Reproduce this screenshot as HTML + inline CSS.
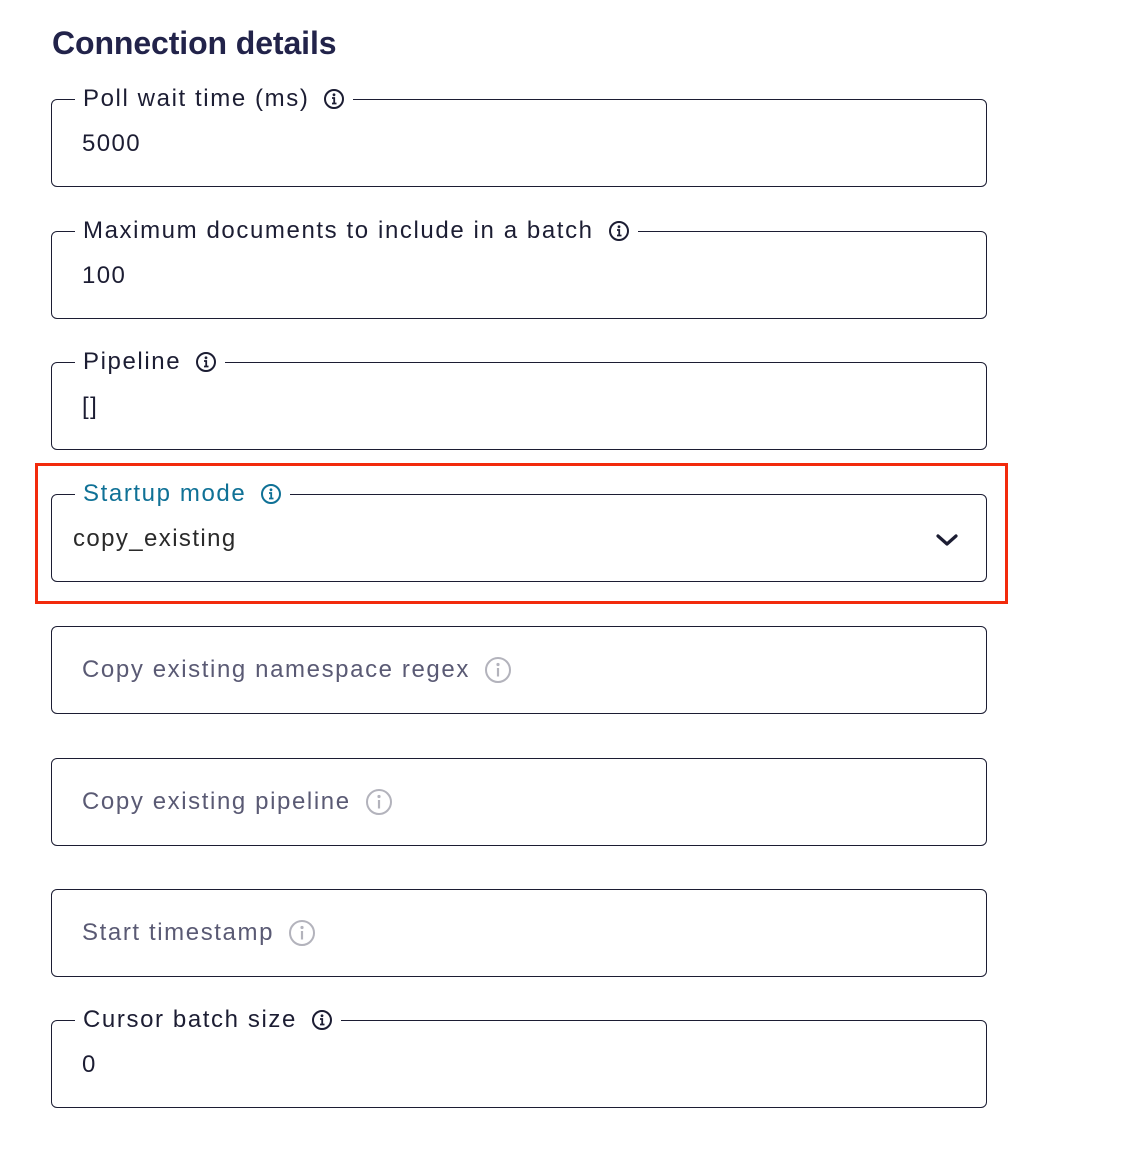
<!DOCTYPE html>
<html><head><meta charset="utf-8"><style>
*{margin:0;padding:0;box-sizing:border-box}
body{width:1140px;height:1174px;background:#fff;font-family:"Liberation Sans",sans-serif;position:relative;overflow:hidden;color:#1c1d33}
h1{position:absolute;left:52px;top:25px;font-size:32px;font-weight:700;color:#22234a;letter-spacing:-0.1px}
.box{position:absolute;left:51px;width:936px;height:88px;border:1.3px solid #1c1d33;border-radius:6px}
.leg{position:absolute;left:23px;top:-17px;background:#fff;padding:0 8px;font-size:24px;line-height:32px;display:flex;align-items:center;white-space:nowrap;letter-spacing:1.6px}
.val{position:absolute;left:30px;top:29px;font-size:24px;line-height:30px;letter-spacing:1.4px}
.ph{position:absolute;left:30px;top:26px;font-size:24px;line-height:34px;color:#5a5a74;display:flex;align-items:center;letter-spacing:1.6px}
.ic{display:inline-block;margin-left:14px}
.red{position:absolute;left:35px;top:463px;width:973px;height:141px;border:3px solid #f22a0c}
</style></head><body>
<h1>Connection details</h1>

<div class="box" style="top:99px"><div class="leg">Poll wait time (ms)<svg class="ic" width="22" height="22" viewBox="0 0 22 22"><circle cx="11" cy="11" r="9" fill="none" stroke="#1c1d33" stroke-width="2"/><circle cx="11" cy="6.8" r="1.4" fill="#1c1d33"/><path d="M9 10h2.2v5.5M9 15.5h4.5" stroke="#1c1d33" stroke-width="1.8" fill="none"/></svg></div><div class="val">5000</div></div>

<div class="box" style="top:231px"><div class="leg">Maximum documents to include in a batch<svg class="ic" width="22" height="22" viewBox="0 0 22 22"><circle cx="11" cy="11" r="9" fill="none" stroke="#1c1d33" stroke-width="2"/><circle cx="11" cy="6.8" r="1.4" fill="#1c1d33"/><path d="M9 10h2.2v5.5M9 15.5h4.5" stroke="#1c1d33" stroke-width="1.8" fill="none"/></svg></div><div class="val">100</div></div>

<div class="box" style="top:362px"><div class="leg">Pipeline<svg class="ic" width="22" height="22" viewBox="0 0 22 22"><circle cx="11" cy="11" r="9" fill="none" stroke="#1c1d33" stroke-width="2"/><circle cx="11" cy="6.8" r="1.4" fill="#1c1d33"/><path d="M9 10h2.2v5.5M9 15.5h4.5" stroke="#1c1d33" stroke-width="1.8" fill="none"/></svg></div><div class="val">[]</div></div>

<div class="box" style="top:494px"><div class="leg" style="color:#0f7196">Startup mode<svg class="ic" width="22" height="22" viewBox="0 0 22 22"><circle cx="11" cy="11" r="9" fill="none" stroke="#0f7196" stroke-width="2"/><circle cx="11" cy="6.8" r="1.4" fill="#0f7196"/><path d="M9 10h2.2v5.5M9 15.5h4.5" stroke="#0f7196" stroke-width="1.8" fill="none"/></svg></div><div class="val" style="left:21px;color:#2a2a2a">copy_existing</div>
<svg style="position:absolute;left:883px;top:37px" width="24" height="16" viewBox="0 0 24 16"><path d="M3 4l9 8 9-8" stroke="#1c1d33" stroke-width="3.2" fill="none" stroke-linecap="round" stroke-linejoin="round"/></svg></div>
<div class="red"></div>

<div class="box" style="top:626px"><div class="ph">Copy existing namespace regex<svg class="ic" width="28" height="28" viewBox="0 0 28 28"><circle cx="14" cy="14" r="12" fill="none" stroke="#b3b3bc" stroke-width="2"/><circle cx="14" cy="8.5" r="1.6" fill="#b3b3bc"/><path d="M14 12v8.5" stroke="#b3b3bc" stroke-width="2.2"/></svg></div></div>

<div class="box" style="top:758px"><div class="ph">Copy existing pipeline<svg class="ic" width="28" height="28" viewBox="0 0 28 28"><circle cx="14" cy="14" r="12" fill="none" stroke="#b3b3bc" stroke-width="2"/><circle cx="14" cy="8.5" r="1.6" fill="#b3b3bc"/><path d="M14 12v8.5" stroke="#b3b3bc" stroke-width="2.2"/></svg></div></div>

<div class="box" style="top:889px"><div class="ph">Start timestamp<svg class="ic" width="28" height="28" viewBox="0 0 28 28"><circle cx="14" cy="14" r="12" fill="none" stroke="#b3b3bc" stroke-width="2"/><circle cx="14" cy="8.5" r="1.6" fill="#b3b3bc"/><path d="M14 12v8.5" stroke="#b3b3bc" stroke-width="2.2"/></svg></div></div>

<div class="box" style="top:1020px"><div class="leg">Cursor batch size<svg class="ic" width="22" height="22" viewBox="0 0 22 22"><circle cx="11" cy="11" r="9" fill="none" stroke="#1c1d33" stroke-width="2"/><circle cx="11" cy="6.8" r="1.4" fill="#1c1d33"/><path d="M9 10h2.2v5.5M9 15.5h4.5" stroke="#1c1d33" stroke-width="1.8" fill="none"/></svg></div><div class="val">0</div></div>
</body></html>
